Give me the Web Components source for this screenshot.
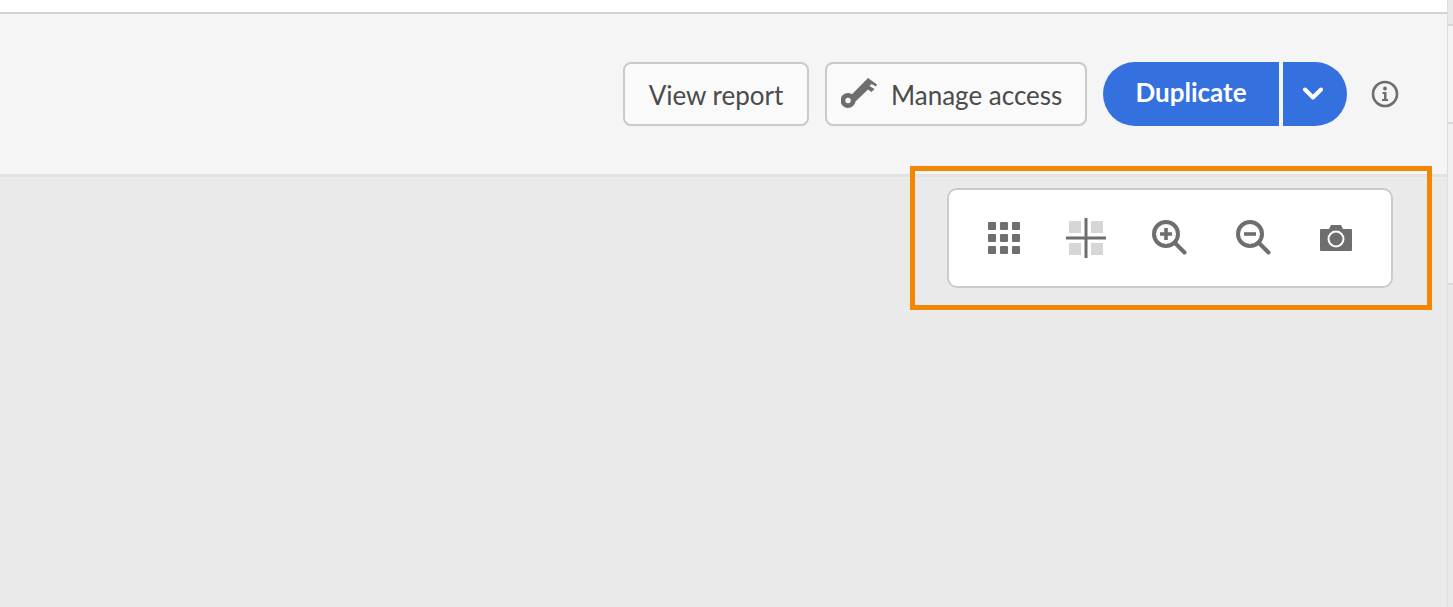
<!DOCTYPE html>
<html lang="en">
<head>
<meta charset="utf-8">
<title>Image toolbar</title>
<style>
  html, body { margin: 0; height: 100%; overflow: hidden; }
  body { font-family: Lato, sans-serif; }
</style>
</head>
<body>
<app-page>
  <top-bar slot="header">
    <action-button style="width: 186px">View report</action-button>
    <action-button class="with-icon" style="width: 262px; justify-content: flex-start; padding-left: 14px">
      <svg slot="icon" width="36" height="31" viewBox="0 0 36 31"><path fill="#6e6e6e" fill-rule="evenodd" d="M7 15a7.500 7.500 0 0 1 4 1.200L27 0 36 6.500 35 8.500 30.500 6 28.500 8 33.500 11 30.500 14 27 11.500 14.500 23.500A7.500 7.500 0 1 1 7 15Zm0 4.800a2.700 2.700 0 1 0 0 5.400 2.700 2.700 0 0 0 0-5.400Z"/></svg>
      <span>Manage access</span>
    </action-button>
    <split-button>Duplicate</split-button>
    <info-icon></info-icon>
  </top-bar>
  <image-toolbar slot="main">
    <tool-button>
      <svg width="34" height="34" viewBox="0 0 34 34" fill="#6e6e6e"><rect x="1" y="1" width="8" height="8" rx="1"/><rect x="13" y="1" width="8" height="8" rx="1"/><rect x="25" y="1" width="8" height="8" rx="1"/><rect x="1" y="13" width="8" height="8" rx="1"/><rect x="13" y="13" width="8" height="8" rx="1"/><rect x="25" y="13" width="8" height="8" rx="1"/><rect x="1" y="25" width="8" height="8" rx="1"/><rect x="13" y="25" width="8" height="8" rx="1"/><rect x="25" y="25" width="8" height="8" rx="1"/></svg>
    </tool-button>
    <tool-button>
      <svg style="margin-right: 2px" width="40" height="40" viewBox="0 0 40 40"><g fill="#d6d6d6"><rect x="3" y="3" width="12" height="12"/><rect x="25" y="3" width="12" height="12"/><rect x="3" y="25" width="12" height="12"/><rect x="25" y="25" width="12" height="12"/></g><path stroke="#6e6e6e" stroke-width="3" d="M0 20H40M20 0V40"/></svg>
    </tool-button>
    <tool-button>
      <svg style="margin-right: 2px" width="36" height="36" viewBox="0 0 36 36" fill="none" stroke="#6e6e6e"><circle cx="15" cy="14" r="12" stroke-width="4"/><path stroke-width="4" stroke-linecap="round" d="M24 23l9.500 9.500"/><path stroke-width="3.600" d="M9 14H21M15 8V20"/></svg>
    </tool-button>
    <tool-button>
      <svg width="36" height="36" viewBox="0 0 36 36" fill="none" stroke="#6e6e6e"><circle cx="15" cy="14" r="12" stroke-width="4"/><path stroke-width="4" stroke-linecap="round" d="M24 23l9.500 9.500"/><path stroke-width="3.600" d="M9 14H21"/></svg>
    </tool-button>
    <tool-button>
      <svg width="32" height="26" viewBox="0 0 32 26"><path fill="#6e6e6e" d="M1 4H9L11 0H21L23 4H31A1 1 0 0 1 32 5V25A1 1 0 0 1 31 26H1A1 1 0 0 1 0 25V5A1 1 0 0 1 1 4Z"/><circle cx="16" cy="14" r="7.500" fill="none" stroke="#fff" stroke-width="2"/></svg>
    </tool-button>
  </image-toolbar>
  <callout-frame slot="overlay"></callout-frame>
</app-page>

<script>
class AppPage extends HTMLElement {
  constructor () {
    super()
    this.attachShadow({ mode: 'open' })
    this.shadowRoot.innerHTML = /* html */`
      <style>
        :host {
          display: grid;
          grid-template-columns: 1fr 6px;
          height: 607px;
          position: relative;
          background: #eaeaea;
        }
        .content { display: flex; flex-direction: column; min-width: 0; }
        .white { height: 12px; background: #fff; }
        .strip {
          border-left: 1px solid #dedede;
          background: linear-gradient(#e9e9e9 0 24px, #d8d8d8 24px 26px, #f4f4f4 26px 122px, #d8d8d8 122px 124px, #f0f0f0 124px 283px, #dcdcdc 283px 285px, #e9e9e9 285px);
        }
      </style>
      <div class="content">
        <div class="white"></div>
        <slot name="header"></slot>
        <slot name="main"></slot>
      </div>
      <div class="strip"></div>
      <slot name="overlay"></slot>
    `
  }
}

class TopBar extends HTMLElement {
  constructor () {
    super()
    this.attachShadow({ mode: 'open' })
    this.shadowRoot.innerHTML = /* html */`
      <style>
        :host {
          display: flex;
          justify-content: flex-end;
          align-items: center;
          gap: 16px;
          height: 160px;
          padding-right: 50px;
          background: #f5f5f5;
          border-top: 2px solid #d2d2d2;
          border-bottom: 3px solid #e2e2e2;
        }
      </style>
      <slot></slot>
    `
  }
}

class ActionButton extends HTMLElement {
  constructor () {
    super()
    this.attachShadow({ mode: 'open' })
    this.shadowRoot.innerHTML = /* html */`
      <style>
        :host {
          display: inline-flex;
          align-items: center;
          justify-content: center;
          box-sizing: border-box;
          height: 64px;
          gap: 14px;
          padding-top: 1px;
          background: #fafafa;
          border: 2px solid #cacaca;
          border-radius: 8px;
          color: #4b4b4b;
          font: 400 26px Lato, sans-serif;
          white-space: nowrap;
        }
        ::slotted(svg) { margin-top: -3px; }
      </style>
      <slot name="icon"></slot>
      <slot></slot>
    `
  }
}

class SplitButton extends HTMLElement {
  constructor () {
    super()
    this.attachShadow({ mode: 'open' })
    this.shadowRoot.innerHTML = /* html */`
      <style>
        :host { display: inline-flex; gap: 4px; height: 64px; }
        div {
          display: flex;
          align-items: center;
          justify-content: center;
          background: #3571de;
          color: #fff;
          font: 700 26px Lato, sans-serif;
        }
        .label { width: 176px; border-radius: 32px 0 0 32px; padding-bottom: 4px; box-sizing: border-box; }
        .more { width: 64px; border-radius: 0 32px 32px 0; padding: 0 4px 2px 0; box-sizing: border-box; }
      </style>
      <div class="label"><slot></slot></div>
      <div class="more">
        <svg width="20" height="13" viewBox="0 0 20 13" fill="none" stroke="#fff" stroke-width="4" stroke-linecap="round" stroke-linejoin="round"><path d="M2 2.500L10 10.500L18 2.500"/></svg>
      </div>
    `
  }
}

class InfoIcon extends HTMLElement {
  constructor () {
    super()
    this.attachShadow({ mode: 'open' })
    this.shadowRoot.innerHTML = /* html */`
      <style>
        :host { display: block; width: 28px; height: 28px; margin-left: 8px; margin-right: -2px; }
        svg { display: block; }
      </style>
      <svg width="28" height="28" viewBox="0 0 28 28"><circle cx="14" cy="14" r="12" fill="none" stroke="#6e6e6e" stroke-width="2.600"/><circle cx="14" cy="8.500" r="1.900" fill="#6e6e6e"/><path fill="#6e6e6e" d="M11.500 12H15.500V19H17V21H11V19H13V14H11.500Z"/></svg>
    `
  }
}

class ImageToolbar extends HTMLElement {
  constructor () {
    super()
    this.attachShadow({ mode: 'open' })
    this.shadowRoot.innerHTML = /* html */`
      <style>
        :host {
          display: flex;
          justify-content: flex-end;
          padding: 11px 54px 0 0;
        }
        .card {
          display: flex;
          justify-content: space-between;
          align-items: center;
          box-sizing: border-box;
          width: 446px;
          height: 100px;
          padding: 0 31px;
          background: #fff;
          border: 2px solid #cbcbcb;
          border-radius: 10px;
        }
      </style>
      <div class="card"><slot></slot></div>
    `
  }
}

class ToolButton extends HTMLElement {
  constructor () {
    super()
    this.attachShadow({ mode: 'open' })
    this.shadowRoot.innerHTML = /* html */`
      <style>
        :host { display: flex; align-items: center; justify-content: center; width: 48px; height: 48px; }
        ::slotted(svg) { display: block; }
      </style>
      <slot></slot>
    `
  }
}

// orange annotation drawn over the screenshot
class CalloutFrame extends HTMLElement {
  constructor () {
    super()
    this.attachShadow({ mode: 'open' })
    this.shadowRoot.innerHTML = /* html */`
      <style>
        :host {
          position: absolute;
          left: 910px;
          top: 166px;
          box-sizing: border-box;
          width: 522px;
          height: 144px;
          border: 5px solid #f28705;
        }
      </style>
    `
  }
}

customElements.define('app-page', AppPage)
customElements.define('top-bar', TopBar)
customElements.define('action-button', ActionButton)
customElements.define('split-button', SplitButton)
customElements.define('info-icon', InfoIcon)
customElements.define('image-toolbar', ImageToolbar)
customElements.define('tool-button', ToolButton)
customElements.define('callout-frame', CalloutFrame)
</script>
</body>
</html>
